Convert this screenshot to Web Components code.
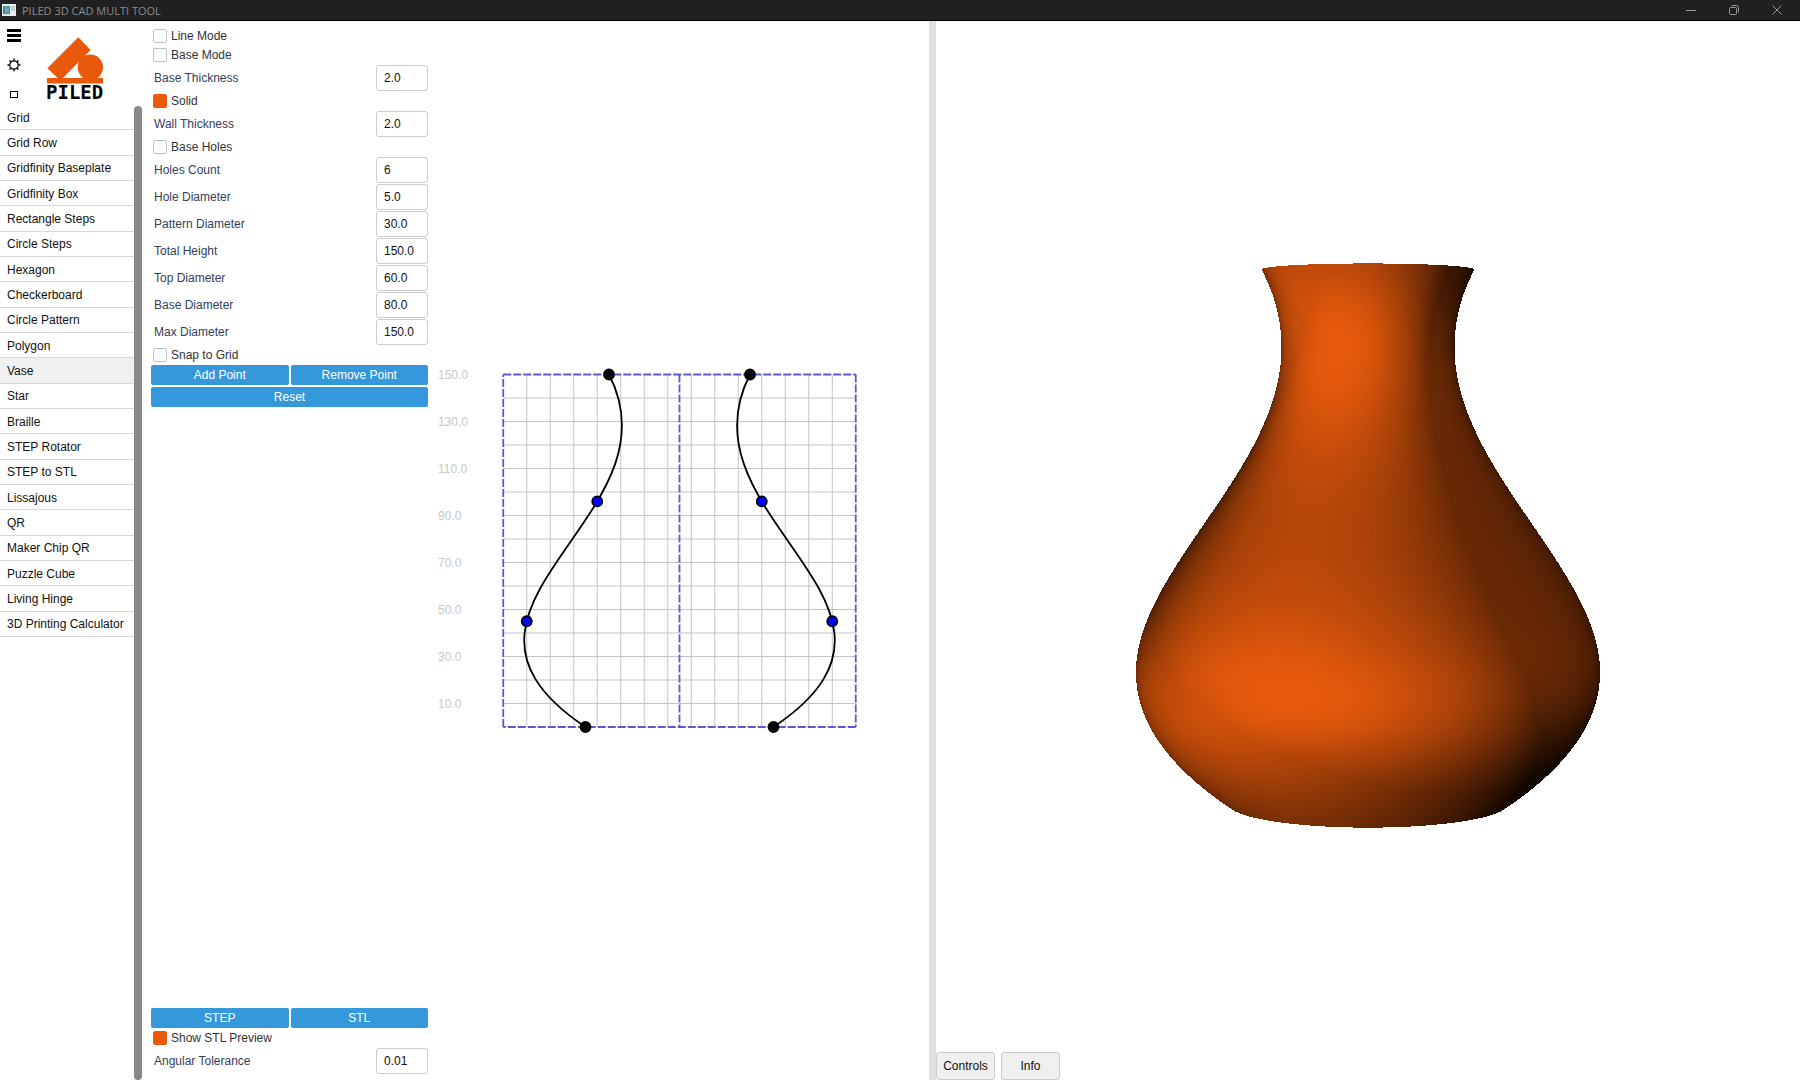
<!DOCTYPE html>
<html lang="en">
<head>
<meta charset="utf-8">
<title>PILED 3D CAD MULTI TOOL</title>
<style>
html, body { height: 100%; margin: 0; }
body { font: 12px/16px "Liberation Sans", Arial, sans-serif; color: #111; background: #fff; overflow: hidden; }
</style>
</head>
<body>
<piled-app></piled-app>
<script>
function define(name, html, setup) {
  const template = document.createElement('template');
  template.innerHTML = '<style>*{box-sizing:border-box}button,input{font:inherit}</style>' + html;
  customElements.define(name, class extends HTMLElement {
    connectedCallback() {
      if (this.shadowRoot) return;
      const root = this.attachShadow({ mode: 'open' });
      root.append(template.content.cloneNode(true));
      if (setup) setup(this, root);
    }
  });
}

/* Vase profile in millimetres (radius, height), one cubic through the four control points. */
const PROFILE = [[30, 150], [-1.7, 89.1], [116.1, 50.8], [40, 0]];
function profileAt(t) {
  const m = 1 - t, w = [m * m * m, 3 * m * m * t, 3 * m * t * t, t * t * t];
  const d = [m * m, 2 * m * t, t * t];
  const point = [0, 0], slope = [0, 0];
  for (let k = 0; k < 2; k++) {
    for (let i = 0; i < 4; i++) point[k] += w[i] * PROFILE[i][k];
    for (let i = 0; i < 3; i++) slope[k] += 3 * d[i] * (PROFILE[i + 1][k] - PROFILE[i][k]);
  }
  return [point[0], point[1], slope[0], slope[1]];
}

define('title-bar', `
<style>
:host { display: flex; align-items: center; height: 21px; background: #202020; border-bottom: 1px solid #000; color: #8c8c8c; padding: 0 2px; flex: none; }
.title { font: 11px/20px "Open Sans", "Noto Sans", sans-serif; margin-left: 6px; padding-top: 1px; flex: 1; }
button { width: 43px; height: 20px; padding: 0; border: 0; background: none; color: #999; display: grid; place-items: center; }
svg { display: block; }
</style>
<svg width="14" height="12" viewBox="0 0 14 12" aria-hidden="true"><rect width="14" height="12" fill="#e8eeee"/><rect x="1" y="2" width="7" height="8" fill="#3b8f86"/><rect x="3" y="3" width="4" height="6" fill="#69a8c0"/><rect x="9" y="2" width="4" height="5" fill="#c5d3d5"/></svg>
<span class="title"><slot></slot></span>
<button aria-label="Minimize"><svg width="10" height="10"><path d="M0 5.5h10" stroke="currentColor"/></svg></button>
<button aria-label="Restore"><svg width="10" height="10" fill="none" stroke="currentColor"><rect x=".5" y="2.500" width="7" height="7" rx="1"/><path d="M2.500 .5h5q2 0 2 2v5"/></svg></button>
<button aria-label="Close"><svg width="10" height="10"><path d="M.5 .5l9 9M9.500 .5l-9 9" stroke="currentColor"/></svg></button>`);

define('piled-logo', `
<style>:host { display: block; } svg { display: block; }</style>
<svg width="60" height="66" viewBox="0 0 60 66" role="img" aria-label="PILED">
<g fill="#e8590c"><path d="M32.300 1.300L44.700 14L14.500 44.500L1.300 32.300z"/><circle cx="44.300" cy="31.300" r="12.700"/><rect x="1" y="42" width="56" height="5.500"/></g>
<text x="0" y="63" font-family="DejaVu Sans Mono" font-weight="700" font-size="19" fill="#000">PILED</text>
</svg>`);

define('tool-nav', `
<style>
:host { display: flex; flex-direction: column; width: 142px; flex: none; }
header { display: flex; height: 84px; flex: none; padding: 7px 7px 0; }
.tools { display: flex; flex-direction: column; gap: 16px; width: 39px; }
.tools button { width: 14px; height: 14px; padding: 0; border: 0; background: none; color: #000; display: block; }
svg { display: block; }
piled-logo { margin-top: 8px; }
.scroll { flex: 1; min-height: 0; display: flex; }
nav { flex: 1; height: 532px; display: grid; grid-auto-rows: 1fr; }
a { display: flex; align-items: center; padding: 1px 0 0 7px; color: #111; text-decoration: none; border-bottom: 1px solid #d8d8d8; white-space: nowrap; }
a[aria-current] { background: #f0f0f0; }
.bar { width: 8px; margin-top: 1px; border-radius: 4px; background: #888; }
</style>
<header>
<div class="tools">
<button aria-label="Menu"><svg width="14" height="14" fill="currentColor"><rect y="1" width="14" height="3"/><rect y="6" width="14" height="3"/><rect y="11" width="14" height="3"/></svg></button>
<button aria-label="Theme"><svg width="14" height="14" viewBox="-7 -7 14 14" stroke="currentColor" fill="none"><circle r="4.200" stroke-width="1.200"/><path d="M0-4.500V-6.500M0 4.500V6.500M-4.500 0H-6.500M4.500 0H6.500M3.200-3.200L4.600-4.600M-3.200-3.200L-4.600-4.600M3.200 3.200L4.600 4.600M-3.200 3.200L-4.600 4.600" stroke-width="1.300"/></svg></button>
<button aria-label="Window"><svg width="14" height="14" fill="none" stroke="currentColor"><rect x="3.500" y="3.500" width="7" height="6"/></svg></button>
</div>
<piled-logo></piled-logo>
</header>
<div class="scroll"><nav></nav><div class="bar"></div></div>`, (host, root) => {
  const nav = root.querySelector('nav');
  for (const name of ['Grid', 'Grid Row', 'Gridfinity Baseplate', 'Gridfinity Box', 'Rectangle Steps', 'Circle Steps', 'Hexagon', 'Checkerboard', 'Circle Pattern', 'Polygon', 'Vase', 'Star', 'Braille', 'STEP Rotator', 'STEP to STL', 'Lissajous', 'QR', 'Maker Chip QR', 'Puzzle Cube', 'Living Hinge', '3D Printing Calculator']) {
    const a = document.createElement('a');
    a.href = '#';
    a.textContent = name;
    if (name === 'Vase') a.setAttribute('aria-current', 'page');
    nav.append(a);
  }
});

define('check-row', `
<style>
:host { display: flex; height: 19px; align-items: center; padding: 0 0 2px 2px; }
label { display: flex; align-items: center; gap: 4px; color: #333; }
input { appearance: none; width: 14px; height: 14px; margin: 0; border: 1px solid #bdc3c7; border-radius: 2px; background: #fff; }
input:checked { background: #e8590c; border-color: #e8590c; }
</style>
<label><input type="checkbox"><slot></slot></label>`, (host, root) => {
  root.querySelector('input').checked = host.hasAttribute('checked');
});

define('value-row', `
<style>
:host { display: block; height: 27px; }
label { display: flex; height: 26px; align-items: center; justify-content: space-between; padding-left: 3px; color: #34405a; }
input { width: 52px; height: 26px; margin: 0; padding: 0 7px; border: 1px solid #ccc; border-radius: 3px; background: #fff; color: #111; }
</style>
<label><span><slot></slot></span><input type="text"></label>`, (host, root) => {
  root.querySelector('input').value = host.getAttribute('value');
});

define('action-button', `
<style>
:host { display: flex; flex: 1; }
button { flex: 1; height: 20px; padding: 0; border: 0; border-radius: 2px; background: #3498db; color: #fff; }
</style>
<button><slot></slot></button>`);

define('vase-form', `
<style>
:host { display: flex; flex-direction: column; width: 286px; flex: none; padding: 6px 0 5px 9px; }
.actions { display: flex; gap: 2px; }
.actions + .actions { margin-top: 2px; }
.export { margin-top: auto; }
.export .actions { margin-bottom: 1px; }
</style>
<check-row>Line Mode</check-row>
<check-row>Base Mode</check-row>
<value-row value="2.0">Base Thickness</value-row>
<check-row checked>Solid</check-row>
<value-row value="2.0">Wall Thickness</value-row>
<check-row>Base Holes</check-row>
<value-row value="6">Holes Count</value-row>
<value-row value="5.0">Hole Diameter</value-row>
<value-row value="30.0">Pattern Diameter</value-row>
<value-row value="150.0">Total Height</value-row>
<value-row value="60.0">Top Diameter</value-row>
<value-row value="80.0">Base Diameter</value-row>
<value-row value="150.0">Max Diameter</value-row>
<check-row>Snap to Grid</check-row>
<div class="edit">
<div class="actions"><action-button>Add Point</action-button><action-button>Remove Point</action-button></div>
<div class="actions"><action-button>Reset</action-button></div>
</div>
<div class="export">
<div class="actions"><action-button>STEP</action-button><action-button>STL</action-button></div>
<check-row checked>Show STL Preview</check-row>
<value-row value="0.01">Angular Tolerance</value-row>
</div>`);

define('profile-editor', `
<style>
:host { display: flex; flex: 1; min-width: 0; align-items: center; justify-content: center; }
svg { display: block; }
text { font: 12px "Liberation Sans", Arial, sans-serif; fill: #c8c8c8; }
</style>
<svg width="500" height="380" viewBox="0 0 500 380" role="img" aria-label="Vase profile"></svg>`, (host, root) => {
  const s = 2.35, X = r => 250.5 + r * s, Y = z => 366 - z * s;
  let out = '<g stroke="#c4c4c4" stroke-width="1">';
  for (let v = 10; v < 150; v += 10) {
    out += `<path d="M${X(v - 75)} ${Y(0)}V${Y(150)}M${X(-75)} ${Y(v)}H${X(75)}"/>`;
  }
  out += '</g><g stroke="#5a5ad0" stroke-width="1.800" stroke-dasharray="8 2" fill="none">';
  out += `<path d="M${X(-75)} ${Y(150)}H${X(75)}"/><path d="M${X(75)} ${Y(150)}V${Y(0)}"/><path d="M${X(75)} ${Y(0)}H${X(-75)}"/><path d="M${X(-75)} ${Y(0)}V${Y(150)}"/><path d="M${X(0)} ${Y(150)}V${Y(0)}"/></g>`;
  for (const side of [-1, 1]) {
    const p = PROFILE.map(([r, z]) => X(side * r) + ' ' + Y(z));
    out += `<path d="M${p[0]}C${p[1]} ${p[2]} ${p[3]}" fill="none" stroke="#000" stroke-width="1.800"/>`;
    for (const [r, z, fixed] of [[30, 150, 1], [35, 96], [65, 45], [40, 0, 1]]) {
      out += `<circle cx="${X(side * r)}" cy="${Y(z)}" r="5" fill="${fixed ? '#000' : '#00f'}" stroke="#000" stroke-width="1.800"/>`;
    }
  }
  for (let z = 150; z > 0; z -= 20) out += `<text x="9" y="${Math.round(Y(z)) + 4}">${z}.0</text>`;
  root.querySelector('svg').innerHTML = out;
});

define('model-viewer', `
<style>
:host { display: flex; position: relative; flex-direction: column; flex: 864 1 0; min-width: 0; }
.stage { flex: 1; min-height: 0; display: flex; align-items: center; justify-content: center; }
canvas { display: block; width: 480px; height: 580px; }
.corner { position: absolute; left: 0; bottom: 0; display: flex; gap: 6px; }
.corner button { width: 59px; height: 28px; padding: 0; border: 1px solid #ccc; border-radius: 3px; background: #efefef; color: #111; }
</style>
<div class="stage"><canvas width="1440" height="1740" role="img" aria-label="3D preview of the vase"></canvas></div>
<div class="corner"><button>Controls</button><button>Info</button></div>`, (host, root) => {
  const canvas = root.querySelector('canvas'), ctx = canvas.getContext('2d');
  const W = canvas.width, H = canvas.height, image = ctx.createImageData(W, H), px = image.data;
  const scale = 3;
  const lights = [[-0.61, -0.2, 0.6], [0.22, 0.34, 0.3], [0.04, -0.1, 0.03]];
  const steps = 3000, rings = [];
  for (let i = 0; i <= steps; i++) {
    const [r, z, dr, dz] = profileAt(i / steps), len = Math.hypot(dr, dz);
    rings.push([r * (3.5 + 0.0003 * z) * scale, (542.5 - 3.56 * z) * scale, 0.17 - 0.227 * z / 150, -dz / len, dr / len]);
  }
  /* Each pixel column walks the front of the vase from rim to base. */
  for (let x = 0; x < W; x++) {
    const dx = x + 0.5 - W / 2;
    let previous = null;
    for (const [r, y, tilt, a, b] of rings) {
      if (Math.abs(dx) > r) { previous = null; continue; }
      const sin = dx / r, cos = Math.sqrt(1 - sin * sin);
      const row = Math.round(y + tilt * r * cos);
      const nx = a * sin, nz = a * cos;
      let lambert = 0;
      for (const l of lights) lambert += Math.max(0, l[0] * nx + l[1] * b + l[2] * nz);
      const light = Math.min(1, lambert * (1 - 0.35 * b * b) * (1 - 0.3 * (1 - nz) ** 3));
      for (let q = previous === null ? row : previous + 1; q <= row; q++) {
        const o = (q * W + x) * 4;
        px[o] = 235 * light; px[o + 1] = 91 * light; px[o + 2] = 12 * light; px[o + 3] = 255;
      }
      previous = previous === null ? row : Math.max(previous, row);
    }
  }
  ctx.putImageData(image, 0, 0);
});

define('piled-app', `
<style>
:host { display: flex; flex-direction: column; height: 100vh; }
main { flex: 1; min-height: 0; display: flex; }
.editor { flex: 787 1 0; min-width: 0; display: flex; }
.splitter { width: 7px; flex: none; background: #dfdfdf; }
</style>
<title-bar>PILED 3D CAD MULTI TOOL</title-bar>
<main>
<tool-nav></tool-nav>
<div class="editor"><vase-form></vase-form><profile-editor></profile-editor></div>
<div class="splitter"></div>
<model-viewer></model-viewer>
</main>`);
</script>
</body>
</html>
